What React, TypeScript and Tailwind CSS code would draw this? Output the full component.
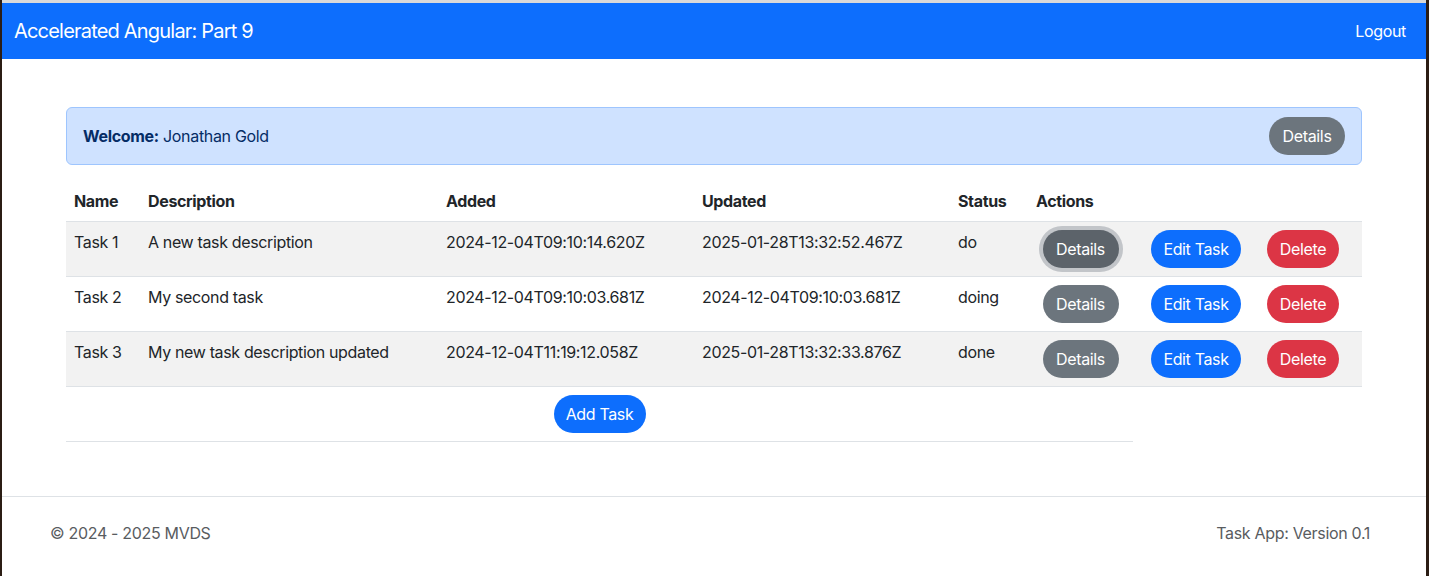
import React from 'react';

type Task = {
  name: string;
  description: string;
  added: string;
  updated: string;
  status: string;
};

const tasks: Task[] = [
  { name: 'Task 1', description: 'A new task description', added: '2024-12-04T09:10:14.620Z', updated: '2025-01-28T13:32:52.467Z', status: 'do' },
  { name: 'Task 2', description: 'My second task', added: '2024-12-04T09:10:03.681Z', updated: '2024-12-04T09:10:03.681Z', status: 'doing' },
  { name: 'Task 3', description: 'My new task description updated', added: '2024-12-04T11:19:12.058Z', updated: '2025-01-28T13:32:33.876Z', status: 'done' },
];

export default function App() {
  return (
    <div className="flex min-h-[576px] bg-[#2b1d14]" style={{ fontFamily: 'Inter, "Noto Sans", sans-serif' }}>
      <div className="w-[2px]" />
      <div className="flex flex-1 flex-col bg-white text-[#212529]">
        <div className="h-[3px] bg-[#d9d9d9]" />

        {/* navbar */}
        <nav className="flex h-[56px] items-center justify-between bg-[#0d6efd] pl-3 pr-5 text-white">
          <span className="text-[20px] leading-[30px] tracking-[-0.04em]">Accelerated Angular: Part 9</span>
          <span className="text-[16px] leading-6 tracking-[-0.02em]">Logout</span>
        </nav>

        <main className="mx-auto w-[1296px] pt-12 pb-[54px]">
          <div className="mb-4 flex h-[58px] items-center justify-between rounded-md border border-[#9ec5fe] bg-[#cfe2ff] px-4 text-[16px] text-[#052c65] tracking-[-0.02em]">
            <div>
              <b className="font-bold">Welcome:</b> Jonathan Gold
            </div>
            <button className="h-[38px] w-[76px] rounded-full bg-[#6c757d] text-white">Details</button>
          </div>

          <table className="w-[1296px] table-fixed border-collapse text-left text-[16px] leading-6 tracking-[-0.022em]">
            <colgroup>
              <col className="w-[74px]" />
              <col className="w-[298px]" />
              <col className="w-[256px]" />
              <col className="w-[256px]" />
              <col className="w-[78px]" />
              <col className="w-[105px]" />
              <col className="w-[126px]" />
              <col className="w-[103px]" />
            </colgroup>
            <thead>
              <tr className="border-b border-[#dee2e6]">
                <th className="p-2 font-bold">Name</th>
                <th className="p-2 font-bold">Description</th>
                <th className="p-2 font-bold">Added</th>
                <th className="p-2 font-bold">Updated</th>
                <th className="p-2 font-bold">Status</th>
                <th className="p-2 font-bold">Actions</th>
                <th className="p-2" />
                <th className="p-2" />
              </tr>
            </thead>
            <tbody>
              {tasks.map((t, i) => (
                <tr key={t.name} className={`border-b border-[#dee2e6] align-top ${i % 2 === 0 ? 'bg-[#f2f2f2]' : 'bg-white'}`}>
                  <td className="p-2">{t.name}</td>
                  <td className="p-2">{t.description}</td>
                  <td className="p-2">{t.added}</td>
                  <td className="p-2">{t.updated}</td>
                  <td className="p-2">{t.status}</td>
                  <td className="p-2 text-center">
                    <button
                      className={`h-[38px] w-[76px] rounded-full text-white ${
                        i === 0 ? 'bg-[#5c636a] ring-4 ring-[#c2c5c9]' : 'bg-[#6c757d]'
                      }`}
                    >
                      Details
                    </button>
                  </td>
                  <td className="p-2 text-center">
                    <button className="h-[38px] w-[90px] rounded-full bg-[#0d6efd] text-white">Edit Task</button>
                  </td>
                  <td className="p-2">
                    <button className="h-[38px] w-[72px] rounded-full bg-[#dc3545] text-white">Delete</button>
                  </td>
                </tr>
              ))}
              <tr>
                <td colSpan={6} className="border-b border-[#dee2e6] p-2 text-center">
                  <button className="h-[38px] w-[92px] rounded-full bg-[#0d6efd] text-white">Add Task</button>
                </td>
                <td />
                <td />
              </tr>
            </tbody>
          </table>
        </main>

        <footer className="flex flex-1 justify-between border-t border-[#dee2e6] pt-6 pb-[31px] pl-12 pr-14 text-[16px] leading-6 text-[#595c5f] tracking-[-0.02em]">
          <span>© 2024 - 2025 MVDS</span>
          <span>Task App: Version 0.1</span>
        </footer>
      </div>
      <div className="w-[3px]" />
    </div>
  );
}
